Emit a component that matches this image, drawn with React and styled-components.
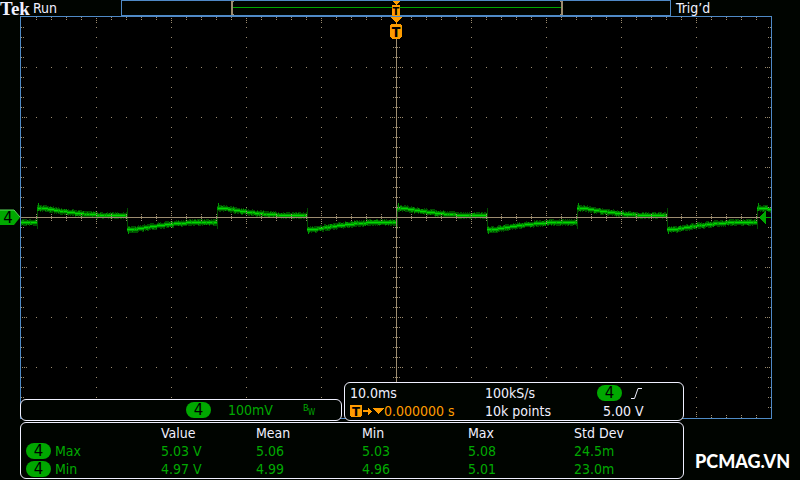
import React from "react";
import styled, { createGlobalStyle } from "styled-components";

const C = {
  bg: "#000400",
  blue: "#4f8ac6",
  tan: "#9c8c70",
  green: "#00a800",
  bright: "#00d800",
  orange: "#ff9c00",
  text: "#f0f0ff",
};
const UI = '"DejaVu Sans Condensed", "Noto Sans", sans-serif';

const Global = createGlobalStyle`
  * { box-sizing: border-box; }
  body { margin: 0; background: ${C.bg}; color: ${C.text}; font: 14px/18px ${UI}; }
`;

const Screen = styled.main`
  display: flex;
  flex-direction: column;
  min-height: 100vh;
  overflow: hidden;
`;

const StatusBar = styled.header`
  display: flex;
  height: 16px;
  line-height: 16px;
`;
const StatusLeft = styled.div`
  display: flex;
  gap: 3px;
  width: 121px;
`;
const Logo = styled.strong`
  font: bold 19px/18px "Liberation Serif", serif;
`;
const StatusRight = styled.div`
  width: 129px;
  padding-left: 5px;
`;
const RecordView = styled.svg`
  display: block;
  flex: 1;
  min-width: 0;
  height: 17px;
`;

const Stage = styled.section`
  display: grid;
  grid-template-columns: 20px minmax(0, 1fr) 88px 28px;
`;
const Graticule = styled.svg`
  grid-area: 1 / 2 / 2 / 4;
  display: block;
  width: 100%;
  margin-bottom: 2px;
  background: #000;
  overflow: visible;
`;
const ChannelMarker = styled.svg`
  grid-area: 1 / 1;
  align-self: center;
  width: 20px;
  height: 17px;
  margin-bottom: 2px;
`;
const Readouts = styled.div`
  grid-area: 1 / 2;
  align-self: end;
  display: grid;
  grid-template-columns: 322fr 340fr;
  gap: 2px;
  align-items: end;
`;
const Panel = styled.div`
  background: ${C.bg};
  border: 1px solid ${C.text};
  border-radius: 6px;
`;
const ChannelPanel = styled(Panel)`
  display: flex;
  align-items: center;
  height: 22px;
  padding-left: 165px;
  color: ${C.green};
`;
const Scale = styled.span`
  width: 75px;
  margin-left: 17px;
`;
const AcquisitionPanel = styled(Panel)`
  display: grid;
  grid-template-columns: 135px 112px 1fr;
  grid-template-rows: 18px 18px;
  align-items: center;
  height: 39px;
  padding-left: 5px;
  padding-top: 1px;
`;
const Inline = styled.span`
  display: flex;
  align-items: center;
  gap: ${(p) => p.$gap || 0}px;
  color: ${(p) => p.$color || "inherit"};
  white-space: nowrap;
`;
const Level = styled.span`
  padding-left: 6px;
`;
const Pill = styled.span`
  flex: none;
  display: inline-flex;
  align-items: center;
  justify-content: center;
  width: 25px;
  height: 16px;
  border-radius: 8px;
  background: ${C.green};
  color: #000;
  font: 15px/16px "DejaVu Sans", sans-serif;
`;

const Footer = styled.footer`
  display: flex;
  margin-top: 1px;
  padding-left: 20px;
`;
const MeasurePanel = styled(Panel)`
  flex: 1;
  height: 57px;
`;
const Table = styled.table`
  width: 100%;
  table-layout: fixed;
  border-collapse: collapse;
  text-align: left;
  color: ${C.green};
  margin-top: 1px;
  th, td { padding: 0; height: 18px; font-weight: normal; white-space: nowrap; }
  thead { color: ${C.text}; }
`;
const Col = styled.col`
  width: ${(p) => (p.$w ? `${p.$w}px` : "auto")};
`;
const RowLabel = styled.span`
  display: flex;
  align-items: center;
  gap: 4px;
  padding-left: 5px;
`;
const Brand = styled.div`
  width: 116px;
  padding: 29px 0 0 11px;
  color: #fff;
  font: 900 18px/20px Lato, sans-serif;
`;

/* ---------- graticule: 10 x 8 divisions of 75 x 50 units ---------- */
const W = 752;
const H = 403;
const MID_X = 376;
const MID_Y = 201;

function graticuleDots() {
  let d = "";
  const dot = (x, y) => {
    d += `M${x} ${y}h1v1h-1z`;
  };
  for (let x = 16; x < 750; x += 15) {
    const major = (x - 1) % 75 === 0;
    if (x !== MID_X) {
      (major ? [2, 4, 6, 396, 398, 400] : [1, 3, 399, 401]).forEach((y) => dot(x, y));
    }
    (major ? [-6, -4, -2, 2, 4, 6] : [-3, -1, 1, 3]).forEach((o) => dot(x, MID_Y + o));
    for (let y = 51; y < 400; y += 50) if (y !== MID_Y) dot(x, y);
  }
  for (let y = 11; y < 400; y += 10) {
    const major = (y - 1) % 50 === 0;
    (major ? [2, 4, 6, 745, 747, 749] : [1, 3, 748, 750]).forEach((x) => dot(x, y));
    (major ? [-6, -4, -2, 2, 4, 6] : [-3, -1, 1, 3]).forEach((o) => dot(MID_X + o, y));
    for (let x = 76; x < 750; x += 75) dot(x, y);
  }
  return d;
}

function tracePaths() {
  let seed = 7;
  const rnd = () => {
    seed = (seed * 16807) % 2147483647;
    return seed / 2147483647;
  };
  const out = { dark: "", mid: "", light: "" };
  const bar = (key, x, y0, y1) => {
    out[key] += `M${x} ${y0}h1V${y1}h-1z`;
  };
  for (let x = 1; x < 751; x += 1) {
    const phase = (x + 163) % 180;
    const high = phase < 90;
    const p = phase % 90;
    const decay = Math.min(1, Math.max(0, p - 8) / 62);
    const curve = 1 - Math.pow(1 - decay, 1.6);
    const y = Math.round(high ? 192 + 7 * curve : 213 - 7 * curve);
    bar("dark", x, y - 2 - Math.floor(rnd() * 2), y + 3 + Math.floor(rnd() * 2));
    bar("mid", x, y - 1 - (rnd() > 0.75 ? 1 : 0), y + 2 + (rnd() > 0.75 ? 1 : 0));
    if (rnd() > 0.1) bar("light", x, y, y + 1);
    if (p === 0) bar("dark", x, 192, 213);
    if (p === 1) bar("mid", x, high ? 187 : 211, high ? 194 : 218);
  }
  return out;
}

const DOTS = graticuleDots();
const TRACE = tracePaths();

function TriggerIcon({ x, y, w, h, size }) {
  return (
    <g>
      <path
        fill={C.orange}
        d={`M${x + 1} ${y}h${w - 2}v1h1v${h - 3}h-1v1h-1v1h-${w - 4}v-1h-1v-1h-1v-${h - 3}h1z`}
      />
      <text x={x + w / 2} y={y + h - 2} textAnchor="middle" fontSize={size} fontWeight="bold" fontFamily="DejaVu Sans Condensed" fill="#000">
        T
      </text>
    </g>
  );
}

function Plot() {
  return (
    <Graticule viewBox={`0 0 ${W} ${H}`} shapeRendering="crispEdges" role="img" aria-label="Channel 4 waveform">
      <path d={TRACE.dark} fill="#004c00" />
      <path d={TRACE.mid} fill="#009800" />
      <path d={TRACE.light} fill={C.bright} />
      <path d={DOTS} fill={C.tan} />
      <path d={`M1 ${MID_Y}h740v1H1zM${MID_X} 20h1v382h-1z`} fill={C.tan} />
      <path d="M0 0h752v403H0zM1 1v401h750V1z" fillRule="evenodd" fill={C.blue} />
      <path d="M746 195v13h-1v-1h-1v-1h-1v-1h-1v-1h-1v-1h-1v-3h1v-1h1v-1h1v-1h1v-1h1v-1zM746 201h5v1h-5z" fill={C.green} />
      <path d="M371 1h11v1h-1v1h-1v1h-1v1h-1v1h-1v2h-1v-2h-1v-1h-1v-1h-1v-1h-1v-1h-1z" fill={C.orange} />
      <TriggerIcon x={370} y={8} w={12} h={15} size={14} />
    </Graticule>
  );
}

function RecordBar() {
  return (
    <RecordView viewBox="0 0 550 17" preserveAspectRatio="none" shapeRendering="crispEdges" aria-hidden="true">
      <path d="M0 0h550v16H0zM1 1v14h548V1z" fillRule="evenodd" fill={C.blue} />
      <path d="M111 7h330v1H111z" fill={C.green} />
      <path d="M110 1h3v1h-1v12h1v1h-3zM442 1h-3v1h1v12h-1v1h3z" fill={C.tan} />
      <path d="M272 1h7v1h-1v1h-1v1h-1v1h-1v-1h-1v-1h-1v-1h-1z" fill={C.orange} />
      <path d="M271 5h8v11h-8z" fill={C.orange} />
      <text x="275" y="15" textAnchor="middle" fontSize="11" fontFamily="DejaVu Sans Condensed" fontWeight="bold" fill="#000">
        T
      </text>
    </RecordView>
  );
}

function DelayIcon() {
  return (
    <svg width="34" height="14" viewBox="0 0 34 14" shapeRendering="crispEdges" aria-hidden="true">
      <path d="M0 1h12v11h-1v1H1v-1H0z" fill={C.orange} />
      <text x="6" y="12" textAnchor="middle" fontSize="13" fontWeight="bold" fontFamily="DejaVu Sans Condensed" fill="#000">
        T
      </text>
      <path d="M13 6h5V4h1v1h1v1h1v1h1v1h-1v1h-1v1h-1v1h-1V8h-5z" fill={C.orange} />
      <path d="M23 4h11v1h-1v1h-1v1h-1v1h-1v1h-1v1h-1V9h-1V8h-1V7h-1V6h-1V5h-1z" fill={C.orange} />
    </svg>
  );
}

const HEAD = ["Value", "Mean", "Min", "Max", "Std Dev"];
const ROWS = [
  ["Max", "5.03 V", "5.06", "5.03", "5.08", "24.5m"],
  ["Min", "4.97 V", "4.99", "4.96", "5.01", "23.0m"],
];

export default function App() {
  return (
    <Screen>
      <Global />
      <StatusBar>
        <StatusLeft>
          <Logo>Tek</Logo>
          <span>Run</span>
        </StatusLeft>
        <RecordBar />
        <StatusRight>Trig’d</StatusRight>
      </StatusBar>

      <Stage>
        <ChannelMarker viewBox="0 0 20 17">
          <path d="M0 1h14l6 7.5L14 16H0z" fill={C.green} />
          <path d="M0 1h14l6 7" fill="none" stroke="#58d858" />
          <text x="8" y="14" textAnchor="middle" fontSize="15" fontFamily="DejaVu Sans" fill="#000">
            4
          </text>
        </ChannelMarker>
        <Plot />
        <Readouts>
          <ChannelPanel>
            <Pill>4</Pill>
            <Scale>100mV</Scale>
            <svg width="14" height="14" viewBox="0 0 14 14" role="img" aria-label="Bandwidth limit">
              <text x="0" y="8" fontSize="9" fontFamily="DejaVu Sans Condensed" fill={C.green}>B</text>
              <text x="5" y="12" fontSize="8" fontFamily="DejaVu Sans Condensed" fill={C.green}>W</text>
            </svg>
          </ChannelPanel>
          <AcquisitionPanel>
            <span>10.0ms</span>
            <span>100kS/s</span>
            <Inline $gap={8}>
              <Pill>4</Pill>
              <svg width="13" height="13" viewBox="0 0 13 13" role="img" aria-label="Rising edge">
                <path d="M1 11.500h3.500L8 1.500h4" fill="none" stroke={C.text} />
              </svg>
            </Inline>
            <Inline $color={C.orange}>
              <DelayIcon />
              0.000000 s
            </Inline>
            <span>10k points</span>
            <Level>5.00 V</Level>
          </AcquisitionPanel>
        </Readouts>
      </Stage>

      <Footer>
        <MeasurePanel>
          <Table>
            <colgroup>
              <Col $w={140} />
              <Col $w={95} />
              <Col $w={106} />
              <Col $w={106} />
              <Col $w={106} />
              <Col />
            </colgroup>
            <thead>
              <tr>
                <td />
                {HEAD.map((h) => (
                  <th key={h} scope="col">{h}</th>
                ))}
              </tr>
            </thead>
            <tbody>
              {ROWS.map(([name, ...values]) => (
                <tr key={name}>
                  <th scope="row">
                    <RowLabel>
                      <Pill>4</Pill>
                      {name}
                    </RowLabel>
                  </th>
                  {values.map((v, i) => (
                    <td key={HEAD[i]}>{v}</td>
                  ))}
                </tr>
              ))}
            </tbody>
          </Table>
        </MeasurePanel>
        <Brand>PCMAG.VN</Brand>
      </Footer>
    </Screen>
  );
}
